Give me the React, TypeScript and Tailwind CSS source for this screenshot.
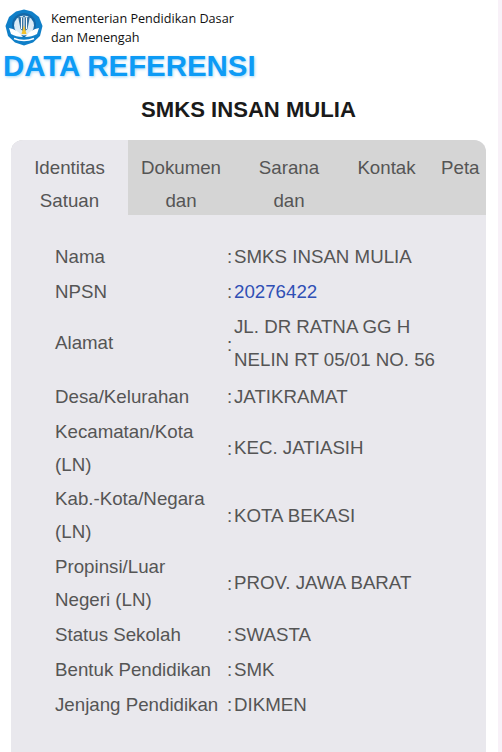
const rows: { label: string; value: string; link?: boolean; className?: string; labelClassName?: string }[] = [
  { label: "Nama", value: "SMKS INSAN MULIA" },
  { label: "NPSN", value: "20276422", link: true },
  { label: "Alamat", value: "JL. DR RATNA GG H NELIN RT 05/01 NO. 56", className: "pb-[2px]", labelClassName: "pb-[4px]" },
  { label: "Desa/Kelurahan", value: "JATIKRAMAT" },
  { label: "Kecamatan/Kota (LN)", value: "KEC. JATIASIH", className: "pb-[2px]" },
  { label: "Kab.-Kota/Negara (LN)", value: "KOTA BEKASI", labelClassName: "leading-[32.5px]" },
  { label: "Propinsi/Luar Negeri (LN)", value: "PROV. JAWA BARAT", className: "pb-[2px]" },
  { label: "Status Sekolah", value: "SWASTA" },
  { label: "Bentuk Pendidikan", value: "SMK" },
  { label: "Jenjang Pendidikan", value: "DIKMEN" },
]

const tabs = [
  { title: "Identitas Satuan", className: "w-[117px] px-[14px] bg-[#e9e8ed]" },
  { title: "Dokumen dan", className: "w-[106px] px-[10px]" },
  { title: "Sarana dan", className: "w-[110px] px-[14px]" },
  { title: "Kontak", className: "w-[85px] px-[13px]" },
  { title: "Peta", className: "w-[57px] pl-[12px] text-left" },
]

const Logo = () => (
  <svg width="38" height="37" viewBox="0 0 38 37" className="shrink-0">
    <path d="M19 0.5 L27 2.5 L34 8 L37.5 17 L35 27 L28 33.5 L19 36.5 L10 33.5 L3 27 L0.5 17 L4 8 L11 2.5 Z" fill="#0f7fc8" />
    <circle cx="19" cy="16" r="12" fill="#1569a8" />
    <circle cx="19" cy="16.5" r="10" fill="#dcecf6" />
    <path d="M13 7 L15.5 20 L19 23 L22.5 20 L25 7 L21 9 L19 6 L17 9 Z" fill="#2f6f9f" />
    <path d="M16.5 9 V20 M19 8 V20 M21.5 9 V20" stroke="#fff" strokeWidth="1.1" />
    <path d="M19 16 L21.5 25 H16.5 Z" fill="#f2c230" />
    <path d="M4 19 Q12 20 18 28 Q11 28 6 25 Z M34 19 Q26 20 20 28 Q27 28 32 25 Z" fill="#fff" />
    <path d="M9 29.5 Q19 33.5 29 29.5" stroke="#fff" strokeWidth="1.4" fill="none" />
  </svg>
)

export default function App() {
  return (
    <div className="h-[752px] overflow-hidden bg-[#f8f1f8] font-['Liberation_Sans',Arial,sans-serif] text-[18.72px] leading-[33px] text-[#555]">
      <div className="h-full w-[498px] bg-white">
        <div className="flex items-center gap-[8px] pt-[9px] pl-[5px]">
          <Logo />
          <p className="font-['Open_Sans',sans-serif] text-[12.65px] leading-[18.5px] text-[#111]">
            Kementerian Pendidikan Dasar
            <br />
            dan Menengah
          </p>
        </div>

        <h1 className="mt-[5px] pl-[3px] text-[29.4px] leading-[30px] font-bold text-[#0d9bf5] [text-shadow:1px_1px_3px_#9fd4f7]">
          DATA REFERENSI
        </h1>

        <h2 className="mt-[9px] pr-[1px] text-center text-[22.1px] leading-[40px] font-bold text-[#1a1a1a]">
          SMKS INSAN MULIA
        </h2>

        <div className="mt-[10px] ml-[11px] w-[475px] overflow-hidden rounded-t-[12px] bg-[#e9e8ed] pb-[40px]">
          <div className="flex h-[75px] bg-[#d5d5d5]">
            {tabs.map((tab) => (
              <div key={tab.title} className={`shrink-0 pt-[11px] text-center ${tab.className}`}>
                {tab.title}
              </div>
            ))}
          </div>

          <table className="mt-[23px] ml-[40px] border-separate border-spacing-y-[2px]">
            <tbody>
              {rows.map((row) => (
                <tr key={row.label}>
                  <td className={`w-[176px] pr-[6px] pl-[4px] ${row.labelClassName ?? ""}`}>{row.label}</td>
                  <td className="w-[7px]">:</td>
                  <td className={`w-[222px] ${row.link ? "text-[#2f4fb5]" : ""} ${row.className ?? ""}`}>
                    {row.value}
                  </td>
                </tr>
              ))}
            </tbody>
          </table>
        </div>
      </div>
    </div>
  )
}
